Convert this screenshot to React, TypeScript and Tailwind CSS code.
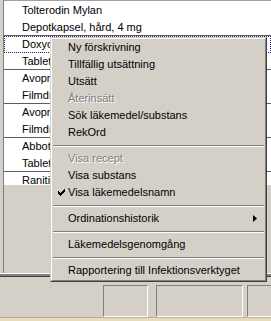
import React from "react";

type Row = { label: string; focus?: boolean };

const groups: Row[][] = [
  [{ label: "Tolterodin Mylan" }, { label: "Depotkapsel, hård, 4 mg" }],
  [{ label: "Doxycyklin Actavis", focus: true }, { label: "Tablett, 100 mg" }],
  [{ label: "Avoprox" }, { label: "Filmdragerad tablett, 20 mg" }],
  [{ label: "Avoprox" }, { label: "Filmdragerad tablett, 10 mg" }],
  [{ label: "Abboticin" }, { label: "Tablett, 250 mg" }],
  [{ label: "Ranitidin" }, { label: "Tablett, 150 mg" }],
];

type MenuEntry =
  | { type: "sep" }
  | { type: "item"; label: string; disabled?: boolean; checked?: boolean; submenu?: boolean };

const menu: MenuEntry[] = [
  { type: "item", label: "Ny förskrivning" },
  { type: "item", label: "Tillfällig utsättning" },
  { type: "item", label: "Utsätt" },
  { type: "item", label: "Återinsätt", disabled: true },
  { type: "item", label: "Sök läkemedel/substans" },
  { type: "item", label: "RekOrd" },
  { type: "sep" },
  { type: "item", label: "Visa recept", disabled: true },
  { type: "item", label: "Visa substans" },
  { type: "item", label: "Visa läkemedelsnamn", checked: true },
  { type: "sep" },
  { type: "item", label: "Ordinationshistorik", submenu: true },
  { type: "sep" },
  { type: "item", label: "Läkemedelsgenomgång" },
  { type: "sep" },
  { type: "item", label: "Rapportering till Infektionsverktyget" },
];

function CheckMark() {
  return (
    <svg width="7" height="7" viewBox="0 0 7 7" className="block">
      <path d="M0 2h1v1h1v1h1v-1h1v-1h1v-1h1v-1h1v3h-1v1h-1v1h-1v1h-1v1h-1v-1h-1v-1h-1z" fill="#000" />
    </svg>
  );
}

function SubArrow() {
  return (
    <svg width="4" height="7" viewBox="0 0 4 7" className="block">
      <path d="M0 0L4 3.5L0 7z" fill="#000" />
    </svg>
  );
}

/* ------------------------------ Context menu ------------------------------ */

function ContextMenu() {
  return (
    <div className="absolute left-[50px] top-[37px] w-[217px] border border-t-[#d4d0c8] border-l-[#d4d0c8] border-b-[#404040] border-r-[#404040] bg-[#d4d0c8]">
      <div className="border border-t-white border-l-white border-b-[#808080] border-r-[#808080] pb-px">
        {menu.map((m, i) =>
          m.type === "sep" ? (
            <div key={i} className="flex h-[9px] items-center px-px">
              <div className="w-full border-t border-b border-t-[#808080] border-b-white" />
            </div>
          ) : (
            <div key={i} className="flex h-[17px] items-center">
              <div className="flex w-[16px] justify-end pr-[3px]">
                {m.checked && <CheckMark />}
              </div>
              <span
                className={
                  m.disabled
                    ? "flex-1 text-[#808080] [text-shadow:1px_1px_0_#fff]"
                    : "flex-1 text-black"
                }
              >
                {m.label}
              </span>
              {m.submenu && (
                <div className="pr-[8px]">
                  <SubArrow />
                </div>
              )}
            </div>
          ),
        )}
      </div>
    </div>
  );
}

/* --------------------------------- Page ---------------------------------- */

export default function App() {
  return (
    <div className="relative h-[321px] w-[271px] overflow-hidden bg-[#d4d0c8] font-['Liberation_Sans',Arial,sans-serif] text-[11px] leading-none text-black">
      <div className="flex h-full flex-col">
        {/* list pane */}
        <div className="flex h-[273px]">
          <div className="w-[4px] border-r border-r-[#808080]" />
          <div className="flex flex-1 flex-col">
            <div className="h-[185px] overflow-hidden border-t border-t-[#a0a0a0] bg-white pt-px">
              {groups.map((g, gi) => (
                <div key={gi} className="border-b border-b-[#5e5e5e]">
                  {g.map((r, ri) => (
                    <div
                      key={ri}
                      className={
                        "flex items-center whitespace-nowrap pl-[18px] " +
                        (ri === 0 ? "h-[17px]" : "h-[16px]") +
                        (r.focus ? " outline-1 -outline-offset-1 outline-dotted outline-[#1c1c70]" : "")
                      }
                    >
                      {r.label}
                    </div>
                  ))}
                </div>
              ))}
            </div>
            <div className="flex-1" />
          </div>
        </div>

        {/* splitter */}
        <div className="h-[4px] border-t border-b border-t-white border-b-[#404040] bg-[#808080]" />

        {/* status area */}
        <div className="flex flex-1 items-start pl-[103px] pt-[8px]">
          <div className="h-[32px] w-[45px] border border-t-[#808080] border-l-[#808080] border-b-white border-r-white" />
          <div className="ml-[8px] h-[32px] w-[87px] border border-t-[#808080] border-l-[#808080] border-b-white border-r-white" />
          <div className="ml-[4px] h-[32px] flex-1 border border-t-[#808080] border-l-[#808080] border-b-white border-r-0" />
        </div>

        <div className="h-[4px] border-t border-t-[#b8b0a0] bg-[#eadcb8]" />
      </div>

      <ContextMenu />
    </div>
  );
}
